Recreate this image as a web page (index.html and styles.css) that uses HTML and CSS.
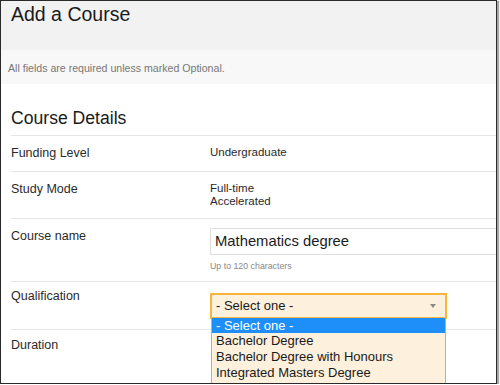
FILE: index.html
```html
<!DOCTYPE html>
<html lang="en">

<head>
  <meta charset="UTF-8">
  <meta name="viewport" content="width=device-width, initial-scale=1.0">
  <title>Add a Course</title>
  <link rel="stylesheet" href="styles.css">
</head>

<body>
  <div class="frame">
    <div class="page-head">
      <h1>Add a Course</h1>
    </div>
    <p class="notice">All fields are required unless marked Optional.</p>

    <div class="details">
      <h2>Course Details</h2>

      <div class="row row-funding">
        <div class="label">Funding Level</div>
        <div class="value">Undergraduate</div>
      </div>

      <div class="row row-mode">
        <div class="label">Study Mode</div>
        <div class="value">Full-time<br>Accelerated</div>
      </div>

      <div class="row row-name">
        <div class="label">Course name</div>
        <div class="field">
          <input type="text" class="text-input" value="Mathematics degree">
          <div class="hint">Up to 120 characters</div>
        </div>
      </div>

      <div class="row row-qual">
        <div class="label">Qualification</div>
        <div class="field">
          <div class="select">
            <span>- Select one -</span>
            <span class="arrow"></span>
          </div>
          <ul class="options">
            <li class="active">- Select one -</li>
            <li>Bachelor Degree</li>
            <li>Bachelor Degree with Honours</li>
            <li>Integrated Masters Degree</li>
          </ul>
        </div>
      </div>

      <div class="row row-duration">
        <div class="label">Duration</div>
        <div class="value"></div>
      </div>
    </div>
  </div>
</body>

</html>
```

FILE: styles.css
```css
body {
  margin: 0;
  padding: 0;
  font-family: "Liberation Sans", Arial, sans-serif;
  color: #222;
  background: #fff;
}

.frame {
  width: 495px;
  height: 382px;
  border: 1px solid #2a2a2a;
  box-shadow: 2px 1px 1px rgba(0, 0, 0, 0.35);
  overflow: hidden;
  background: #fff;
}

.page-head {
  height: 47px;
  padding: 2px 0 0 10px;
  background-color: #f2f2f2;
}

h1 {
  margin: 0;
  font-size: 19.5px;
  line-height: 22px;
  font-weight: normal;
  color: #1a1a1a;
}

.notice {
  margin: 0;
  height: 22px;
  padding: 12px 0 0 7px;
  background-color: #f8f8f8;
  font-size: 10.6px;
  line-height: 12px;
  color: #777;
}

.details {
  margin-left: 10px;
}

h2 {
  margin: 0;
  padding: 24px 0 7px;
  font-size: 17.6px;
  line-height: 20px;
  font-weight: normal;
  color: #1a1a1a;
  border-bottom: 1px solid #e6e6e6;
}

.row {
  display: grid;
  grid-template-columns: 199px 1fr;
  padding: 10px 0 9px;
  border-bottom: 1px solid #e6e6e6;
}

.label {
  font-size: 12.5px;
  line-height: 15px;
  color: #2a2a2a;
}

.value {
  font-size: 11.5px;
  line-height: 13.3px;
  color: #2a2a2a;
}

.row-funding {
  padding-bottom: 10px;
}

.row-name {
  padding: 9px 0 10px;
}

.row-name .label {
  padding-top: 1px;
}

.text-input {
  display: block;
  box-sizing: border-box;
  width: calc(100% + 6px);
  height: 27px;
  margin: 0;
  padding: 0 4px;
  border: 1px solid #dedede;
  border-radius: 0;
  font-family: "Liberation Sans", Arial, sans-serif;
  font-size: 14.8px;
  color: #1a1a1a;
  background: #fff;
}

.hint {
  margin-top: 6px;
  font-size: 8.8px;
  line-height: 10px;
  color: #888;
}

.row-qual {
  padding: 7px 0 10px;
}

.row-qual .field {
  position: relative;
  padding-top: 4px;
}

.select {
  box-sizing: border-box;
  width: 237px;
  height: 26px;
  padding: 0 9px 0 4px;
  display: flex;
  align-items: center;
  justify-content: space-between;
  border: 2px solid #f7b53d;
  background-color: #fdf0dc;
  font-size: 13px;
  color: #1a1a1a;
}

.arrow {
  width: 0;
  height: 0;
  border-left: 3px solid transparent;
  border-right: 3px solid transparent;
  border-top: 4px solid #8a8a8a;
}

/* open dropdown list sitting over the rows below */
.options {
  position: absolute;
  top: 29px;
  left: 1px;
  width: 235px;
  height: 66px;
  margin: 0;
  padding: 0;
  list-style: none;
  background-color: #fdf0dc;
  border: 1px solid #a9b4c2;
  border-top: none;
  border-bottom: none;
  box-sizing: border-box;
  z-index: 2;
}

.options li {
  height: 15.7px;
  line-height: 15.7px;
  padding: 0 4px;
  font-size: 13px;
  color: #1a1a1a;
  white-space: nowrap;
}

.options li.active {
  background-color: #1e8ff8;
  color: #fff;
}

.row-duration {
  padding: 8px 0 40px;
}
```
